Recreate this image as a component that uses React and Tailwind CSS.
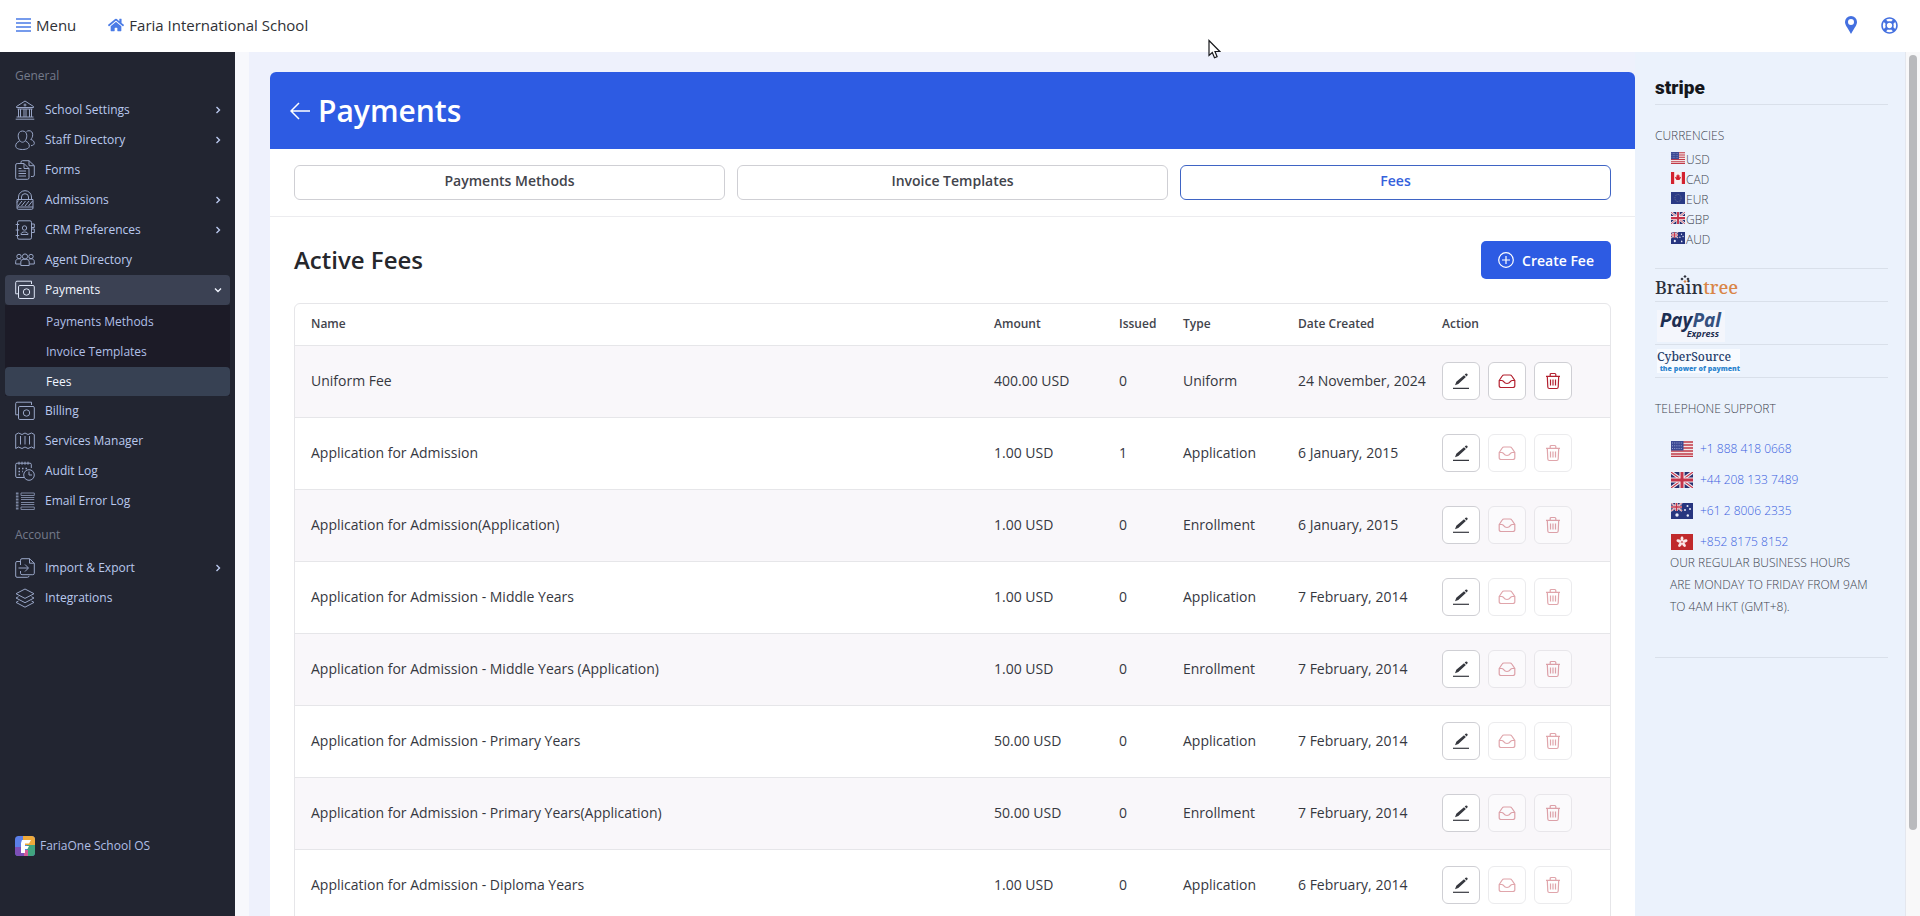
import clsx from 'clsx';
import { FaHome, FaRegLifeRing } from 'react-icons/fa';

const ICONS = {
    school: (
        <>
            <path d="M1.5 6.5 10 1l8.5 5.5v1h-17zM2.5 9h15M3.5 9v8M5.5 9v8M9 9v8M11 9v8M14.5 9v8M16.5 9v8M1.5 17h17M.7 19.2h18.6" />
            <circle cx="10" cy="5" r="1" />
        </>
    ),
    staff: (
        <>
            <path d="M7.5 1C4.8 1 3.2 3 3.2 5.8s1.6 6.4 4.3 6.4 4.3-3.6 4.3-6.4S10.200 1 7.500 1zM4.500 11.200C2.200 12 .7 13.400.7 16c0 2.300 2.800 3.500 6.800 3.500s6.800-1.200 6.800-3.500c0-2.600-1.500-4-3.800-4.800" />
            <path d="M11.500 1.700c.7-.7 1.500-1 2.500-1 2.200 0 3.700 1.600 3.700 4 0 2-.8 3.800-2 4.700 2.300.7 3.600 1.900 3.600 4 0 1.200-1.200 2-3.300 2.300" />
        </>
    ),
    forms: (
        <>
            <path d="M6 3.500H2.200A1.500 1.500 0 0 0 .7 5v12.800a1.500 1.500 0 0 0 1.500 1.500h10.300a1.500 1.500 0 0 0 1.500-1.500V8.500l-5-5H6zM9 3.500v5h5" />
            <path d="M6 3V2.200A1.500 1.500 0 0 1 7.500.7H14l5.300 5V15a1.500 1.500 0 0 1-1.500 1.500H16M14 .7v5h5.300M3.500 8.500h3M3.500 11h7.500M3.500 13.500h7.500M3.500 16h7.500" />
        </>
    ),
    admissions: (
        <>
            <path d="M2 9.500h16V18a1.300 1.300 0 0 1-1.300 1.300H3.300A1.300 1.300 0 0 1 2 18zM2 17h16M3.500 9V7a6.500 6.300 0 0 1 13 0v2M6.500 9V7a3.500 3.300 0 0 1 7 0v2" />
            <path d="m3 16 4-5M6.500 16l4-5M10 16l4-5M13.500 16l4-5M2 12.500 3.500 10.500" />
        </>
    ),
    crm: (
        <>
            <rect x="2.500" y=".8" width="14" height="18.400" rx="1.500" />
            <path d="M.7 4.500h3.500M.7 10h3.500M.7 15.500h3.500M16.500 4h2.800v3.500h-2.800M16.500 9h2.800v3.500h-2.800M6 14.500c0-2 1.500-2.500 3.500-2.500s3.500.5 3.500 2.500z" />
            <circle cx="9.500" cy="8" r="2.200" />
        </>
    ),
    agent: (
        <>
            <circle cx="10" cy="6.500" r="2.600" />
            <circle cx="4" cy="6.500" r="2.200" />
            <circle cx="16" cy="6.500" r="2.200" />
            <path d="M5.800 15.500V12c0-1.800 1.500-2.800 4.200-2.800s4.200 1 4.200 2.800v3.500zM5.500 14H.7v-2.500c0-1.500 1.200-2.700 3.300-2.700 1 0 1.800.2 2.400.7M14.500 14h4.800v-2.500c0-1.500-1.200-2.700-3.300-2.700-1 0-1.800.2-2.400.7" />
        </>
    ),
    money: (
        <>
            <path d="M16.500 4V1.200H2A1.300 1.300 0 0 0 .7 2.500v11.300H3" />
            <rect x="3.500" y="5.500" width="15.800" height="13" rx="1.300" />
            <circle cx="11.500" cy="12" r="3.200" />
        </>
    ),
    map: (
        <path d="M.7 3.500 3.500 2 7 3.500 10 2l3 1.500L16.500 2l2.800 1.500V17.500L16.500 16 13 17.500 10 16l-3 1.500L3.500 16 .7 17.500zM5.500 5v8.500M10 5v8.500M14.500 5v8.500" />
    ),
    audit: (
        <>
            <path d="M9 16.500H2A1.300 1.300 0 0 1 .7 15.200V3.500A1.300 1.300 0 0 1 2 2.200h13a1.300 1.300 0 0 1 1.300 1.300V7M4 .7v3M7 .7v3M10 .7v3M13 .7v3" />
            <path strokeWidth="1.500" d="M3.500 7.500h1.500M7 7.500h1.500M3.500 10.500h1.500M3.500 13.500h1.500M7 10.500h.8M10.500 7.500H12" />
            <circle cx="14" cy="14" r="5.300" />
            <path d="M14 10.500V14h3" />
        </>
    ),
    errors: (
        <g opacity=".75">
            <path strokeWidth="2.600" strokeDasharray="2 1" d="M2.200 1.500v17.500" />
            <path d="M6 2h13.300v2.500H6zM6 6.500h13.300M6 8.500h13.300M6 11.500h13.300M6 13.500h13.300M6 16h13.300v2.500H6z" />
        </g>
    ),
    transfer: (
        <>
            <path d="M5.500 7V2.200A1.500 1.500 0 0 1 7 .7h7.500l4.800 4.500v10a1.500 1.500 0 0 1-1.500 1.500H7a1.500 1.500 0 0 1-1.500-1.500V13M14.500.7v4.500h4.800" />
            <path d="M5 3.500H2A1.300 1.300 0 0 0 .7 4.800V18A1.300 1.300 0 0 0 2 19.300h10.500a1.500 1.500 0 0 0 1.500-1.500M3.500 10H13M10 6.500l3.500 3.500-3.500 3.500" />
        </>
    ),
    layers: (
        <path d="m10 1 9 4.700-9 4.700-9-4.700zM3.500 8.700 1 10l9 4.700L19 10l-2.500-1.300M3.500 13 1 14.400 10 19.200l9-4.800L16.500 13" />
    ),
};

const generalItems = [
    { label: 'School Settings', icon: 'school', arrow: true },
    { label: 'Staff Directory', icon: 'staff', arrow: true },
    { label: 'Forms', icon: 'forms' },
    { label: 'Admissions', icon: 'admissions', arrow: true },
    { label: 'CRM Preferences', icon: 'crm', arrow: true },
    { label: 'Agent Directory', icon: 'agent' },
    { label: 'Payments', icon: 'money', open: true, children: ['Payments Methods', 'Invoice Templates', 'Fees'] },
    { label: 'Billing', icon: 'money' },
    { label: 'Services Manager', icon: 'map' },
    { label: 'Audit Log', icon: 'audit' },
    { label: 'Email Error Log', icon: 'errors' },
];

const accountItems = [
    { label: 'Import & Export', icon: 'transfer', arrow: true },
    { label: 'Integrations', icon: 'layers' },
];

const tabs = ['Payments Methods', 'Invoice Templates', 'Fees'];

const fees = [
    { name: 'Uniform Fee', amount: '400.00 USD', issued: 0, type: 'Uniform', date: '24 November, 2024', editable: true },
    { name: 'Application for Admission', amount: '1.00 USD', issued: 1, type: 'Application', date: '6 January, 2015' },
    { name: 'Application for Admission(Application)', amount: '1.00 USD', issued: 0, type: 'Enrollment', date: '6 January, 2015' },
    { name: 'Application for Admission - Middle Years', amount: '1.00 USD', issued: 0, type: 'Application', date: '7 February, 2014' },
    { name: 'Application for Admission - Middle Years (Application)', amount: '1.00 USD', issued: 0, type: 'Enrollment', date: '7 February, 2014' },
    { name: 'Application for Admission - Primary Years', amount: '50.00 USD', issued: 0, type: 'Application', date: '7 February, 2014' },
    { name: 'Application for Admission - Primary Years(Application)', amount: '50.00 USD', issued: 0, type: 'Enrollment', date: '7 February, 2014' },
    { name: 'Application for Admission - Diploma Years', amount: '1.00 USD', issued: 0, type: 'Application', date: '6 February, 2014' },
];

const currencies = [
    { code: 'USD', flag: 'us' },
    { code: 'CAD', flag: 'ca' },
    { code: 'EUR', flag: 'eu' },
    { code: 'GBP', flag: 'gb' },
    { code: 'AUD', flag: 'au' },
];

const phones = [
    { number: '+1 888 418 0668', flag: 'us' },
    { number: '+44 208 133 7489', flag: 'gb' },
    { number: '+61 2 8006 2335', flag: 'au' },
    { number: '+852 8175 8152', flag: 'hk' },
];

function UnionJack() {
    return (
        <>
            <rect width="22" height="16" fill="#27306f" />
            <path d="M0 0 22 16M22 0 0 16" stroke="#f3eef2" strokeWidth="3.400" />
            <path d="M0 0 22 16M22 0 0 16" stroke="#c4344a" strokeWidth="1.100" />
            <path d="M11 0v16M0 8h22" stroke="#f3eef2" strokeWidth="5.200" />
            <path d="M11 0v16M0 8h22" stroke="#c4344a" strokeWidth="3" />
        </>
    );
}

const FLAGS = {
    us: (
        <>
            <rect width="22" height="16" fill="#f3e4e6" />
            <path d="M0 1h22M0 4h22M0 7h22M0 10h22M0 13h22M0 15.500h22" stroke="#c03a48" strokeWidth="1.500" />
            <rect width="12.500" height="9.500" fill="#3c4a94" />
            <path d="M1 2h11M1 4.800h11M1 7.500h11" stroke="#aeb8e2" strokeWidth=".8" strokeDasharray="1 1.200" />
        </>
    ),
    ca: (
        <>
            <rect width="22" height="16" fill="#f7f1f2" />
            <path d="M0 0h5v16H0zM17 0h5v16h-5z" fill="#d3222f" />
            <path d="m11 2.500 1.400 2.300 1.300-.6-.4 3 2-1 .3 1.500-2.400 3h-4.400l-2.400-3 .3-1.500 2 1-.4-3 1.300.6z" fill="#d3222f" />
        </>
    ),
    eu: (
        <>
            <rect width="22" height="16" fill="#2a3a85" />
            <circle cx="11" cy="8" r="4.800" fill="none" stroke="#8f93a0" strokeWidth="1.100" strokeDasharray="1 1.500" />
        </>
    ),
    gb: <UnionJack />,
    au: (
        <>
            <rect width="22" height="16" fill="#26357f" />
            <g transform="scale(.5)">
                <UnionJack />
            </g>
            <g fill="#e9ecfa">
                <circle cx="6" cy="12" r="1.700" />
                <circle cx="16.500" cy="3" r="1" />
                <circle cx="14" cy="7" r="1" />
                <circle cx="19" cy="6" r="1" />
                <circle cx="16.800" cy="12.500" r="1.200" />
            </g>
        </>
    ),
    hk: (
        <>
            <rect width="22" height="16" fill="#c02a2c" />
            <g fill="#fbe9e8">
                <ellipse cx="11" cy="4.800" rx="1.500" ry="2.600" />
                <ellipse cx="11" cy="4.800" rx="1.500" ry="2.600" transform="rotate(72 11 8)" />
                <ellipse cx="11" cy="4.800" rx="1.500" ry="2.600" transform="rotate(144 11 8)" />
                <ellipse cx="11" cy="4.800" rx="1.500" ry="2.600" transform="rotate(216 11 8)" />
                <ellipse cx="11" cy="4.800" rx="1.500" ry="2.600" transform="rotate(288 11 8)" />
            </g>
        </>
    ),
};

function Flag({ name, className }) {
    return (
        <svg viewBox="0 0 22 16" preserveAspectRatio="none" className={clsx('shrink-0', className)} aria-hidden="true">
            {FLAGS[name]}
        </svg>
    );
}

function Chevron({ down }) {
    return (
        <svg viewBox="0 0 8 8" className="w-2 h-2" fill="none" stroke="currentColor" strokeWidth="1.400" aria-hidden="true">
            <path d={down ? 'M1 2.500 4 5.500 7 2.500' : 'M2.500 1 5.500 4 2.500 7'} />
        </svg>
    );
}

function MenuItem({ item }) {
    return (
        <li>
            <a
                href="#"
                className={clsx(
                    'flex items-center h-[30px] pl-[10px] pr-2 rounded-sm',
                    item.open ? 'bg-[#3b4153] text-[#f1f5ff]' : 'text-[#bac9ee]'
                )}
            >
                <svg
                    viewBox="0 0 20 20"
                    className={clsx('w-5 h-5 shrink-0', item.open ? 'text-[#dfe6f7]' : 'text-[#98a5c6]')}
                    fill="none"
                    stroke="currentColor"
                    strokeWidth="1"
                    aria-hidden="true"
                >
                    {ICONS[item.icon]}
                </svg>
                <span className="ml-[10px] flex-1">{item.label}</span>
                {(item.arrow || item.open) && <Chevron down={item.open} />}
            </a>
            {item.children && (
                <ul className="bg-[#1c1b27] pt-[2px]">
                    {item.children.map((child) => (
                        <li key={child}>
                            <a
                                href="#"
                                className={clsx(
                                    'flex items-center pl-[41px] rounded-sm',
                                    child === 'Fees' ? 'h-[29px] bg-[#374153] text-[#f1f5ff]' : 'h-[30px] text-[#b0bfe6]'
                                )}
                            >
                                {child}
                            </a>
                        </li>
                    ))}
                </ul>
            )}
        </li>
    );
}

function Sidebar() {
    return (
        <aside className="w-[235px] shrink-0 bg-[#222531] flex flex-col px-[5px] pt-3 pb-14 text-[12px] leading-5">
            <nav>
                <h2 className="pl-[10px] h-[31px] pt-[2px] text-[#747a8a]">General</h2>
                <ul>
                    {generalItems.map((item) => (
                        <MenuItem key={item.label} item={item} />
                    ))}
                </ul>
                <h2 className="pl-[10px] h-[37px] pt-[9px] text-[#747a8a]">Account</h2>
                <ul>
                    {accountItems.map((item) => (
                        <MenuItem key={item.label} item={item} />
                    ))}
                </ul>
            </nav>
            <a href="#" className="mt-auto flex items-center gap-[5px] pl-[10px] h-7 text-[#b0bfe6]">
                <svg viewBox="0 0 20 20" className="w-5 h-5" aria-hidden="true">
                    <clipPath id="logo">
                        <rect width="20" height="20" rx="3.500" />
                    </clipPath>
                    <g clipPath="url(#logo)">
                        <rect width="20" height="20" fill="#5b7fe8" />
                        <path d="M8 0h12v9H8z" fill="#efaa3b" />
                        <path d="M0 11h9v9H0z" fill="#7d4fb6" />
                        <path d="M12 9h8v11h-8z" fill="#41a57f" />
                        <path d="M9 14h4v6H9z" fill="#d45c9a" />
                        <path d="M7 4h9l-2 3.500h-4V10h4l-1.500 3H10v4H6V7z" fill="#fff" />
                    </g>
                </svg>
                FariaOne School OS
            </a>
        </aside>
    );
}

function ActionButton({ label, disabled, danger, children }) {
    return (
        <button
            type="button"
            aria-label={label}
            disabled={disabled}
            className={clsx(
                'w-[38px] h-[38px] flex items-center justify-center rounded-md border border-[#cfcfd4] bg-white',
                danger ? 'text-[#b3202f]' : 'text-[#36383f]',
                disabled && 'opacity-40'
            )}
        >
            <svg viewBox="0 0 18 18" className="w-[18px] h-[18px]" fill="none" stroke="currentColor" strokeWidth="1.200" aria-hidden="true">
                {children}
            </svg>
        </button>
    );
}

function FeeRow({ fee }) {
    return (
        <tr className="h-[72px] border-t border-[#e6e6e9] odd:bg-[#f9f7fa]">
            <td className="pl-4">{fee.name}</td>
            <td>{fee.amount}</td>
            <td>{fee.issued}</td>
            <td>{fee.type}</td>
            <td>{fee.date}</td>
            <td>
                <div className="flex gap-2">
                    <ActionButton label="Edit fee">
                        <path d="m3 13.200 1.300-3.400L12 3.200l1.900 1.900-7.600 6.800zM12.700 2.600l.9-.9q.8-.6 1.400 0l.4.400q.6.700 0 1.400l-.9.900z" fill="currentColor" stroke="none" />
                        <path d="M1 16.300h16" />
                    </ActionButton>
                    <ActionButton label="Archive fee" danger disabled={!fee.editable}>
                        <path d="M1.200 8.500 4.200 4Q4.800 3 6 3h6q1.200 0 1.800 1l3 4.500v5.200a1.800 1.800 0 0 1-1.800 1.800H3a1.800 1.800 0 0 1-1.800-1.800zM1.200 8.500h2.600q1 0 1.600.8 1.600 2.200 3.600 2.200t3.600-2.200q.6-.8 1.600-.8h2.600" />
                    </ActionButton>
                    <ActionButton label="Delete fee" danger disabled={!fee.editable}>
                        <path d="M2 4.300h14M6.200 4V2.500q0-1 1-1h3.600q1 0 1 1V4M3.300 4.500 3.800 15q.1 1.500 1.500 1.500h7.400q1.400 0 1.500-1.500l.5-10.500M6.500 7.500v6M9 7.500v6M11.500 7.500v6" />
                    </ActionButton>
                </div>
            </td>
        </tr>
    );
}

function SupportPanel() {
    return (
        <aside className="w-[270px] shrink-0 bg-[#ebf2fc] pl-5 pr-[17px] text-[12px] leading-5 text-[#40444f] font-light">
            <div className="h-[53px] pt-6 border-b border-[#d9e0ea]">
                <strong className="block text-[19px] leading-6 font-black font-[Roboto,sans-serif] text-[#15171c]">stripe</strong>
            </div>
            <section className="h-[164px] pt-[21px] border-b border-[#d9e0ea]">
                <h3>CURRENCIES</h3>
                <ul className="pl-4 pt-1">
                    {currencies.map((currency) => (
                        <li key={currency.code} className="flex items-center gap-px h-5">
                            <Flag name={currency.flag} className="w-[14px] h-[12px] mb-1" />
                            {currency.code}
                        </li>
                    ))}
                </ul>
            </section>
            <div className="relative h-[33px] pt-1 border-b border-[#d9e0ea] font-['Noto_Serif','DejaVu_Serif',serif] text-[18px] leading-7 font-medium text-[#2b2f3a]">
                Brain<span className="text-[#d98547]">tree</span>
                <svg viewBox="0 0 10 8" className="absolute left-[25px] top-[6px] w-[10px] h-2" fill="#2b2f3a" aria-hidden="true">
                    <path d="m5 0 1.600 1.500L5 3 3.400 1.500zM2 2.500 3.600 4 2 5.500.4 4zM8 2.500 9.600 4 8 5.500 6.400 4z" />
                    <path d="M5 5 6.600 6.500 5 8 3.400 6.500z" fill="#d98547" />
                </svg>
            </div>
            <div className="h-[43px] pt-2 border-b border-[#d9e0ea]">
                <div className="w-[68px] h-8 ml-[2px] flex flex-col items-end bg-[#f4f6fc] pr-1 italic font-bold text-[#1e2f52]">
                    <span className="text-[19px] leading-5">
                        Pay<span className="text-[#35517f]">Pal</span>
                    </span>
                    <span className="text-[9px] leading-2 pr-[2px]">Express</span>
                </div>
            </div>
            <div className="h-[33px] pt-1 border-b border-[#d9e0ea]">
                <div className="w-[83px] h-6 ml-[2px] flex flex-col items-start bg-[#f8fbff] text-[#26406b]">
                    <span className="text-[12px] leading-4 font-medium font-['Noto_Serif','DejaVu_Serif',serif]">CyberSource</span>
                    <span className="self-end text-[7px] leading-2 font-extrabold text-[#2f86cf]">the power of payment</span>
                </div>
            </div>
            <section className="h-[280px] pt-[21px] border-b border-[#d9e0ea]">
                <h3>TELEPHONE SUPPORT</h3>
                <ul className="pl-4 pt-[14px]">
                    {phones.map((phone) => (
                        <li key={phone.number} className="flex items-center gap-[7px] h-[31px]">
                            <Flag name={phone.flag} className="w-[22px] h-[16px]" />
                            <a href="#" className="text-[#3a5fe0]">
                                {phone.number}
                            </a>
                        </li>
                    ))}
                </ul>
                <p className="-mt-[5px] pl-[15px] pr-4 leading-[22px]">
                    OUR REGULAR BUSINESS HOURS ARE MONDAY TO FRIDAY FROM 9AM TO 4AM HKT (GMT+8).
                </p>
            </section>
        </aside>
    );
}

export default function App() {
    return (
        <div className="relative h-screen overflow-hidden flex flex-col bg-white font-['Open_Sans',sans-serif] text-[#36383f]">
            {/* Top bar */}
            <header className="h-[52px] shrink-0 flex items-center px-4 pb-[2px] text-[15px] leading-5 text-[#2f3136]">
                <button type="button" className="flex items-center gap-[5px]">
                    <svg viewBox="0 0 15 14" className="w-[15px] h-[14px]" stroke="#4a7be6" strokeWidth="1.300" aria-hidden="true">
                        <path d="M0 1h15M0 5h15M0 9h15M0 13h15" />
                    </svg>
                    Menu
                </button>
                <a href="#" className="ml-8 flex items-center gap-[5px]">
                    <FaHome className="text-[16px] text-[#4a7be6]" />
                    Faria International School
                </a>
                <div className="ml-auto flex items-center gap-6 pr-[6px] text-[#4470e0]">
                    <button type="button" aria-label="Location">
                        <svg viewBox="0 0 12 18" className="w-3 h-[18px]" fill="currentColor" fillRule="evenodd" aria-hidden="true">
                            <path d="M6 0a6 6 0 0 1 6 6c0 2.800-2 5-6 12C2 11 0 8.800 0 6a6 6 0 0 1 6-6zm0 3a3 3 0 1 0 0 6 3 3 0 0 0 0-6z" />
                        </svg>
                    </button>
                    <button type="button" aria-label="Help">
                        <FaRegLifeRing className="text-[17px]" />
                    </button>
                </div>
            </header>

            <div className="flex-1 min-h-0 flex">
                <Sidebar />

                <div className="flex-1 min-w-0 flex overflow-hidden bg-[#eef1fc] border-l-[14px] border-[#f7f8fc]">
                    <main className="flex-1 min-w-0 pl-[21px] pt-5">
                        <div className="min-h-full bg-white rounded-t-md overflow-hidden">
                            <div className="h-[77px] bg-[#2d5be3] flex items-center gap-2 pl-5 text-white">
                                <a href="#" aria-label="Back">
                                    <svg viewBox="0 0 20 18" className="w-5 h-[18px]" fill="none" stroke="currentColor" strokeWidth="1.500" aria-hidden="true">
                                        <path d="M20 9H1M9 1 1 9l8 8" />
                                    </svg>
                                </a>
                                <h1 className="text-[30px] leading-9 font-semibold">Payments</h1>
                            </div>

                            <nav className="grid grid-cols-3 gap-3 px-6 py-4 border-b border-[#ececef]">
                                {tabs.map((tab) => (
                                    <a
                                        key={tab}
                                        href="#"
                                        className={clsx(
                                            'h-[35px] pt-[5px] text-center text-[14px] leading-5 font-semibold rounded-md border',
                                            tab === 'Fees' ? 'border-[#3f64c4] text-[#3561dc]' : 'border-[#cfcfd4] text-[#42444c]'
                                        )}
                                    >
                                        {tab}
                                    </a>
                                ))}
                            </nav>

                            <section className="px-6 pt-6">
                                <div className="flex items-center justify-between h-[38px]">
                                    <h2 className="text-[24px] leading-8 font-semibold text-[#26272c]">Active Fees</h2>
                                    <button type="button" className="h-[38px] w-[130px] flex items-center justify-center gap-2 rounded-[5px] bg-[#2d5be3] text-white text-[14px] font-semibold">
                                        <svg viewBox="0 0 16 16" className="w-4 h-4" fill="none" stroke="currentColor" strokeWidth="1.200" aria-hidden="true">
                                            <circle cx="8" cy="8" r="7.300" />
                                            <path d="M8 4v8M4 8h8" />
                                        </svg>
                                        Create Fee
                                    </button>
                                </div>

                                <div className="mt-6 border border-[#e6e6e9] rounded-t-md overflow-hidden">
                                    <table className="w-full table-fixed text-left text-[14px] leading-5">
                                        <colgroup>
                                            <col />
                                            <col className="w-[125px]" />
                                            <col className="w-16" />
                                            <col className="w-[115px]" />
                                            <col className="w-36" />
                                            <col className="w-[168px]" />
                                        </colgroup>
                                        <thead>
                                            <tr className="h-[41px] text-[12px] text-[#42444c]">
                                                <th className="pl-4 font-semibold">Name</th>
                                                <th className="font-semibold">Amount</th>
                                                <th className="font-semibold">Issued</th>
                                                <th className="font-semibold">Type</th>
                                                <th className="font-semibold">Date Created</th>
                                                <th className="font-semibold">Action</th>
                                            </tr>
                                        </thead>
                                        <tbody>
                                            {fees.map((fee) => (
                                                <FeeRow key={fee.name} fee={fee} />
                                            ))}
                                        </tbody>
                                    </table>
                                </div>
                            </section>
                        </div>
                    </main>
                    <SupportPanel />
                </div>

                {/* Scroll track */}
                <div className="w-[15px] shrink-0 bg-[#f8f8f9] border-l border-[#e4e7ee] pl-[3px] pt-[3px]">
                    <div className="w-2 h-[90%] rounded-full bg-[#b9babd]" />
                </div>
            </div>

            {/* Mouse pointer */}
            <svg viewBox="0 0 13 20" className="absolute left-[1208px] top-[39px] w-[13px] h-5" fill="#fff" stroke="#17181c" strokeWidth="1.200" aria-hidden="true">
                <path d="M1 1.500v15l3.300-3 2.200 5.300 2.600-1.100L7 12.500h4.800z" />
            </svg>
        </div>
    );
}
